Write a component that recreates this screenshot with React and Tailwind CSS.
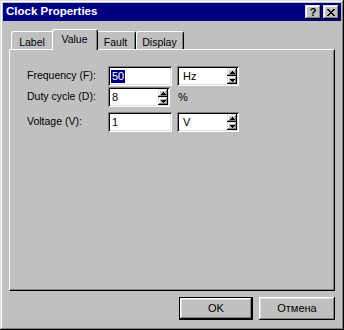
import React from "react";

const raised =
  "shadow-[inset_-1px_-1px_0_#000,inset_1px_1px_0_#fff,inset_-2px_-2px_0_#808080,inset_2px_2px_0_#dfdfdf]";
const raisedSmall =
  "shadow-[inset_-1px_-1px_0_#000,inset_1px_1px_0_#dfdfdf,inset_-2px_-2px_0_#808080,inset_2px_2px_0_#fff]";
const sunken =
  "shadow-[inset_1px_1px_0_#808080,inset_-1px_-1px_0_#fff,inset_2px_2px_0_#000,inset_-2px_-2px_0_#dfdfdf]";

const font = { fontFamily: '"Liberation Sans", Arial, sans-serif' };

function Arrow({ up }) {
  return (
    <svg width="5" height="3" viewBox="0 0 5 3" className="block">
      {up ? (
        <path d="M2 0h1v1h1v1h1v1H0V2h1V1h1z" fill="#000" />
      ) : (
        <path d="M0 0h5v1H4v1H3v1H2V2H1V1H0z" fill="#000" />
      )}
    </svg>
  );
}

function Spinner() {
  return (
    <div className="flex flex-col w-[10px] h-[16px]">
      <div className={`flex-1 bg-[#c0c0c0] flex items-center justify-center ${raisedSmall}`}>
        <Arrow up />
      </div>
      <div className={`flex-1 bg-[#c0c0c0] flex items-center justify-center ${raisedSmall}`}>
        <Arrow />
      </div>
    </div>
  );
}

function Field({ w, children, spin }) {
  return (
    <div className={`h-[20px] bg-white ${sunken} flex items-center pl-[3px] pr-[2px]`} style={{ width: w }}>
      <div className="flex-1 flex items-center text-[11px] text-black leading-none">{children}</div>
      {spin && <Spinner />}
    </div>
  );
}

function Tab({ label, selected, w }) {
  return (
    <div
      className={`relative bg-[#c0c0c0] border-l border-t border-r border-l-white border-t-white border-r-black rounded-t-[3px] ${
        selected ? "z-10 h-[21px] -mb-px -mx-[2px]" : "h-[18px]"
      }`}
      style={{ width: w }}
    >
      <div
        className={`h-full border-r border-r-[#808080] flex justify-center text-[10.5px] text-black leading-none ${
          selected ? "pt-[4px]" : "pt-[5px]"
        }`}
      >
        {label}
      </div>
    </div>
  );
}

function Row({ label, children, className = "" }) {
  return (
    <div className={`flex items-center h-[20px] ${className}`}>
      <div className="w-[81px] text-[10.5px] text-black leading-none -mt-[2px]">{label}</div>
      {children}
    </div>
  );
}

export default function App() {
  return (
    <div
      className="w-[344px] h-[330px] bg-[#c0c0c0] p-[3px] flex flex-col shadow-[inset_-1px_-1px_0_#000,inset_1px_1px_0_#dfdfdf,inset_-2px_-2px_0_#808080,inset_2px_2px_0_#fff]"
      style={font}
    >
      {/* Title bar */}
      <div className="h-[18px] bg-[#000080] flex items-center pl-[3px] pr-[2px]">
        <div className="flex-1 text-white font-bold text-[11.5px] leading-none">Clock Properties</div>
        <div className="flex items-center gap-[2px]">
          <div className={`w-[16px] h-[14px] bg-[#c0c0c0] ${raisedSmall} flex items-center justify-center`}>
            <span className="text-[11px] font-bold leading-none text-black">?</span>
          </div>
          <div className={`w-[16px] h-[14px] bg-[#c0c0c0] ${raisedSmall} flex items-center justify-center`}>
            <svg width="8" height="7" viewBox="0 0 8 7">
              <path d="M0 0h2v1h1v1h2V1h1V0h2v1H7v1H6v1H5v1h1v1h1v1h1v1H6V6H5V5H3v1H2v1H0V6h1V5h1V4h1V3H2V2H1V1H0z" fill="#000" />
            </svg>
          </div>
        </div>
      </div>

      {/* Tabs + panel */}
      <div className="mt-[8px] mx-[6px] flex flex-col">
        <div className="flex items-end h-[20px] pl-[2px]">
          <Tab label="Label" w={43} />
          <Tab label="Value" w={46} selected />
          <Tab label="Fault" w={40} />
          <Tab label="Display" w={48} />
        </div>
        <div className="h-[242px] border-l border-t border-r border-b border-l-white border-t-white border-r-black border-b-black">
          <div className="h-full border-r border-b border-r-[#808080] border-b-[#808080] pt-[16px] pl-[17px] flex flex-col">
            <Row label="Frequency (F):">
              <Field w={64}>
                <span className="bg-[#000080] text-white px-px py-[1px]">50</span>
              </Field>
              <div className="ml-[5px]">
                <Field w={62} spin>
                  <span className="pl-[3px]">Hz</span>
                </Field>
              </div>
            </Row>
            <Row label="Duty cycle (D):" className="mt-[1px]">
              <Field w={62} spin>
                <span className="pl-px">8</span>
              </Field>
              <span className="ml-[8px] text-[11px] leading-none text-black">%</span>
            </Row>
            <Row label="Voltage (V):" className="mt-[5px]">
              <Field w={64}>
                <span className="pl-px">1</span>
              </Field>
              <div className="ml-[5px]">
                <Field w={62} spin>
                  <span className="pl-[3px]">V</span>
                </Field>
              </div>
            </Row>
          </div>
        </div>
      </div>

      {/* Buttons */}
      <div className="mt-[6px] flex justify-end gap-[6px] pr-[6px]">
        <div className="w-[74px] h-[23px] border border-black">
          <div className={`w-full h-full bg-[#c0c0c0] ${raised} flex items-center justify-center text-[11px] text-black leading-none`}>
            OK
          </div>
        </div>
        <div className={`w-[76px] h-[23px] bg-[#c0c0c0] ${raised} flex items-center justify-center text-[11px] text-black leading-none`}>
          Отмена
        </div>
      </div>
    </div>
  );
}
